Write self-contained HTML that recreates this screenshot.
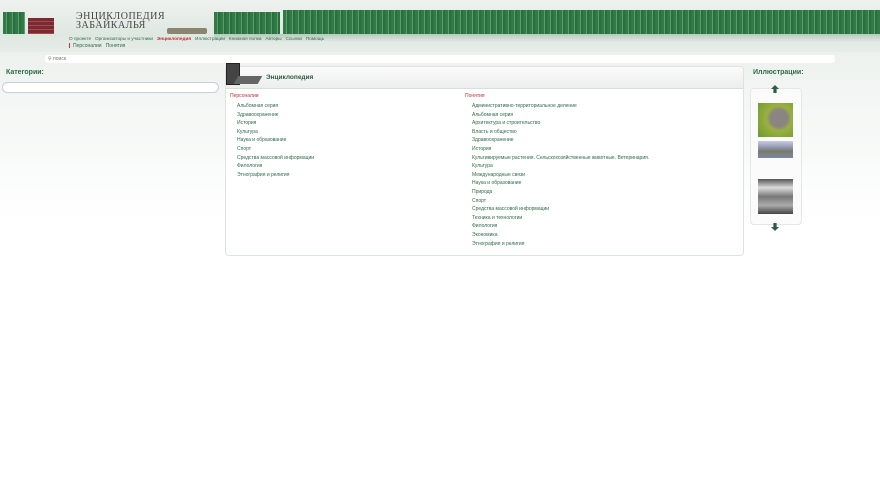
<!DOCTYPE html>
<html><head><meta charset="utf-8"><style>
*{margin:0;padding:0;box-sizing:border-box}
body{width:880px;height:498px;overflow:hidden;font-family:"Liberation Sans",sans-serif;background:linear-gradient(#e4ebe6 0,#eef2ef 60px,#f3f6f4 100px,#fff 220px);position:relative}
.a{position:absolute}
.hdr{left:0;top:0;width:880px;height:52px;background:linear-gradient(#eef2ef,#dfe7e1 35px,#e7ede9)}
.books{background:repeating-linear-gradient(90deg,#2f7a45 0 3px,#5a9e6c 3px 4px,#2a6e3d 4px 6px);}
.t{font-size:5px;color:#2f6a48;white-space:nowrap}
.r{color:#b8323a}
.panel{left:225px;top:66px;width:519px;height:190px;background:#fff;border:1px solid #dde3df;border-radius:4px}
.ph{left:0;top:0;width:517px;height:22px;background:linear-gradient(#fafbfa,#eceeed);border-bottom:1px solid #dcdcdc;border-radius:4px 4px 0 0}
.l{line-height:8.6px}
</style></head><body>
<div class="a hdr"></div>
<div class="a books" style="left:3px;top:12px;width:22px;height:22px"></div>
<div class="a" style="left:28px;top:18px;width:26px;height:16px;background:repeating-linear-gradient(#7a2a30 0 3px,#a54a4e 3px 4px)"></div>
<div class="a" style="left:76px;top:12px;font-family:'Liberation Serif',serif;font-size:10px;line-height:9px;color:#444;letter-spacing:.5px">ЭНЦИКЛОПЕДИЯ<br>ЗАБАЙКАЛЬЯ</div>
<div class="a" style="left:167px;top:28px;width:40px;height:6px;background:#8a8570;border-radius:2px"></div>
<div class="a books" style="left:214px;top:12px;width:66px;height:22px"></div>
<div class="a books" style="left:283px;top:10px;width:597px;height:24px"></div>
<div class="a" style="left:214px;top:34px;width:666px;height:8px;background:linear-gradient(rgba(60,120,80,.25),transparent)"></div>
<div class="a t" style="left:69px;top:36px;font-size:4.7px">О проекте&nbsp;&nbsp;&nbsp;Организаторы и участники&nbsp;&nbsp;&nbsp;<b class="r">Энциклопедия</b>&nbsp;&nbsp;&nbsp;Иллюстрации&nbsp;&nbsp;&nbsp;Книжная полка&nbsp;&nbsp;&nbsp;Авторы&nbsp;&nbsp;&nbsp;Ссылки&nbsp;&nbsp;&nbsp;Помощь</div>
<div class="a" style="left:69px;top:43px;width:1px;height:5px;background:#c33"></div>
<div class="a t" style="left:73px;top:43px">Персоналии&nbsp;&nbsp;&nbsp;Понятия</div>
<div class="a" style="left:45px;top:55px;width:790px;height:8px;background:#fff;border-radius:3px"></div>
<div class="a t" style="left:48px;top:56px;color:#777">⚲ поиск</div>
<div class="a" style="left:6px;top:69px;font-size:7px;font-weight:bold;color:#2f6a48">Категории:</div>
<div class="a" style="left:2px;top:82px;width:217px;height:11px;background:#fff;border:1px solid #ccd;border-radius:6px"></div>
<div class="a panel"><div class="a ph"></div>
<div class="a" style="left:40px;top:7px;font-size:6.5px;font-weight:bold;color:#2f5a40">Энциклопедия</div>
<div class="a t r l" style="left:4px;top:25px">Персоналии</div>
<div class="a t l" style="left:11px;top:35px">Альбомная серия<br>Здравоохранение<br>История<br>Культура<br>Наука и образование<br>Спорт<br>Средства массовой информации<br>Филология<br>Этнография и религия</div>
<div class="a t r l" style="left:239px;top:25px">Понятия</div>
<div class="a t l" style="left:246px;top:35px">Административно-территориальное деление<br>Альбомная серия<br>Архитектура и строительство<br>Власть и общество<br>Здравоохранение<br>История<br>Культивируемые растения. Сельскохозяйственные животные. Ветеринария.<br>Культура<br>Международные связи<br>Наука и образование<br>Природа<br>Спорт<br>Средства массовой информации<br>Техника и технологии<br>Филология<br>Экономика<br>Этнография и религия</div>
</div>
<div class="a" style="left:226px;top:63px;width:14px;height:22px;background:#444;border:1px solid #222"></div>
<div class="a" style="left:236px;top:76px;width:24px;height:8px;background:#666;transform:skewX(-30deg)"></div>
<div class="a" style="left:753px;top:69px;font-size:7px;font-weight:bold;color:#2f6a48">Иллюстрации:</div>
<div class="a" style="left:750px;top:88px;width:52px;height:137px;background:#fafbfa;border:1px solid #e4e8e5;border-radius:4px"></div>
<div class="a" style="left:771px;top:85px;width:8px;height:8px;background:#2f5a48;clip-path:polygon(50% 0,100% 50%,70% 50%,70% 100%,30% 100%,30% 50%,0 50%)"></div>
<div class="a" style="left:771px;top:223px;width:8px;height:8px;background:#2f5a48;clip-path:polygon(30% 0,70% 0,70% 50%,100% 50%,50% 100%,0 50%,30% 50%)"></div>
<div class="a" style="left:758px;top:103px;width:35px;height:34px;background:radial-gradient(circle at 60% 45%,#8a8580 0 30%,#9ab040 45%,#6a9a30)"></div>
<div class="a" style="left:758px;top:141px;width:35px;height:17px;background:linear-gradient(#c8cce0,#8e94b0 40%,#7a7c60 60%,#7a86b0)"></div>
<div class="a" style="left:758px;top:179px;width:35px;height:35px;background:linear-gradient(#555,#ddd 25%,#777 50%,#aaa 75%,#444)"></div>
</body></html>
